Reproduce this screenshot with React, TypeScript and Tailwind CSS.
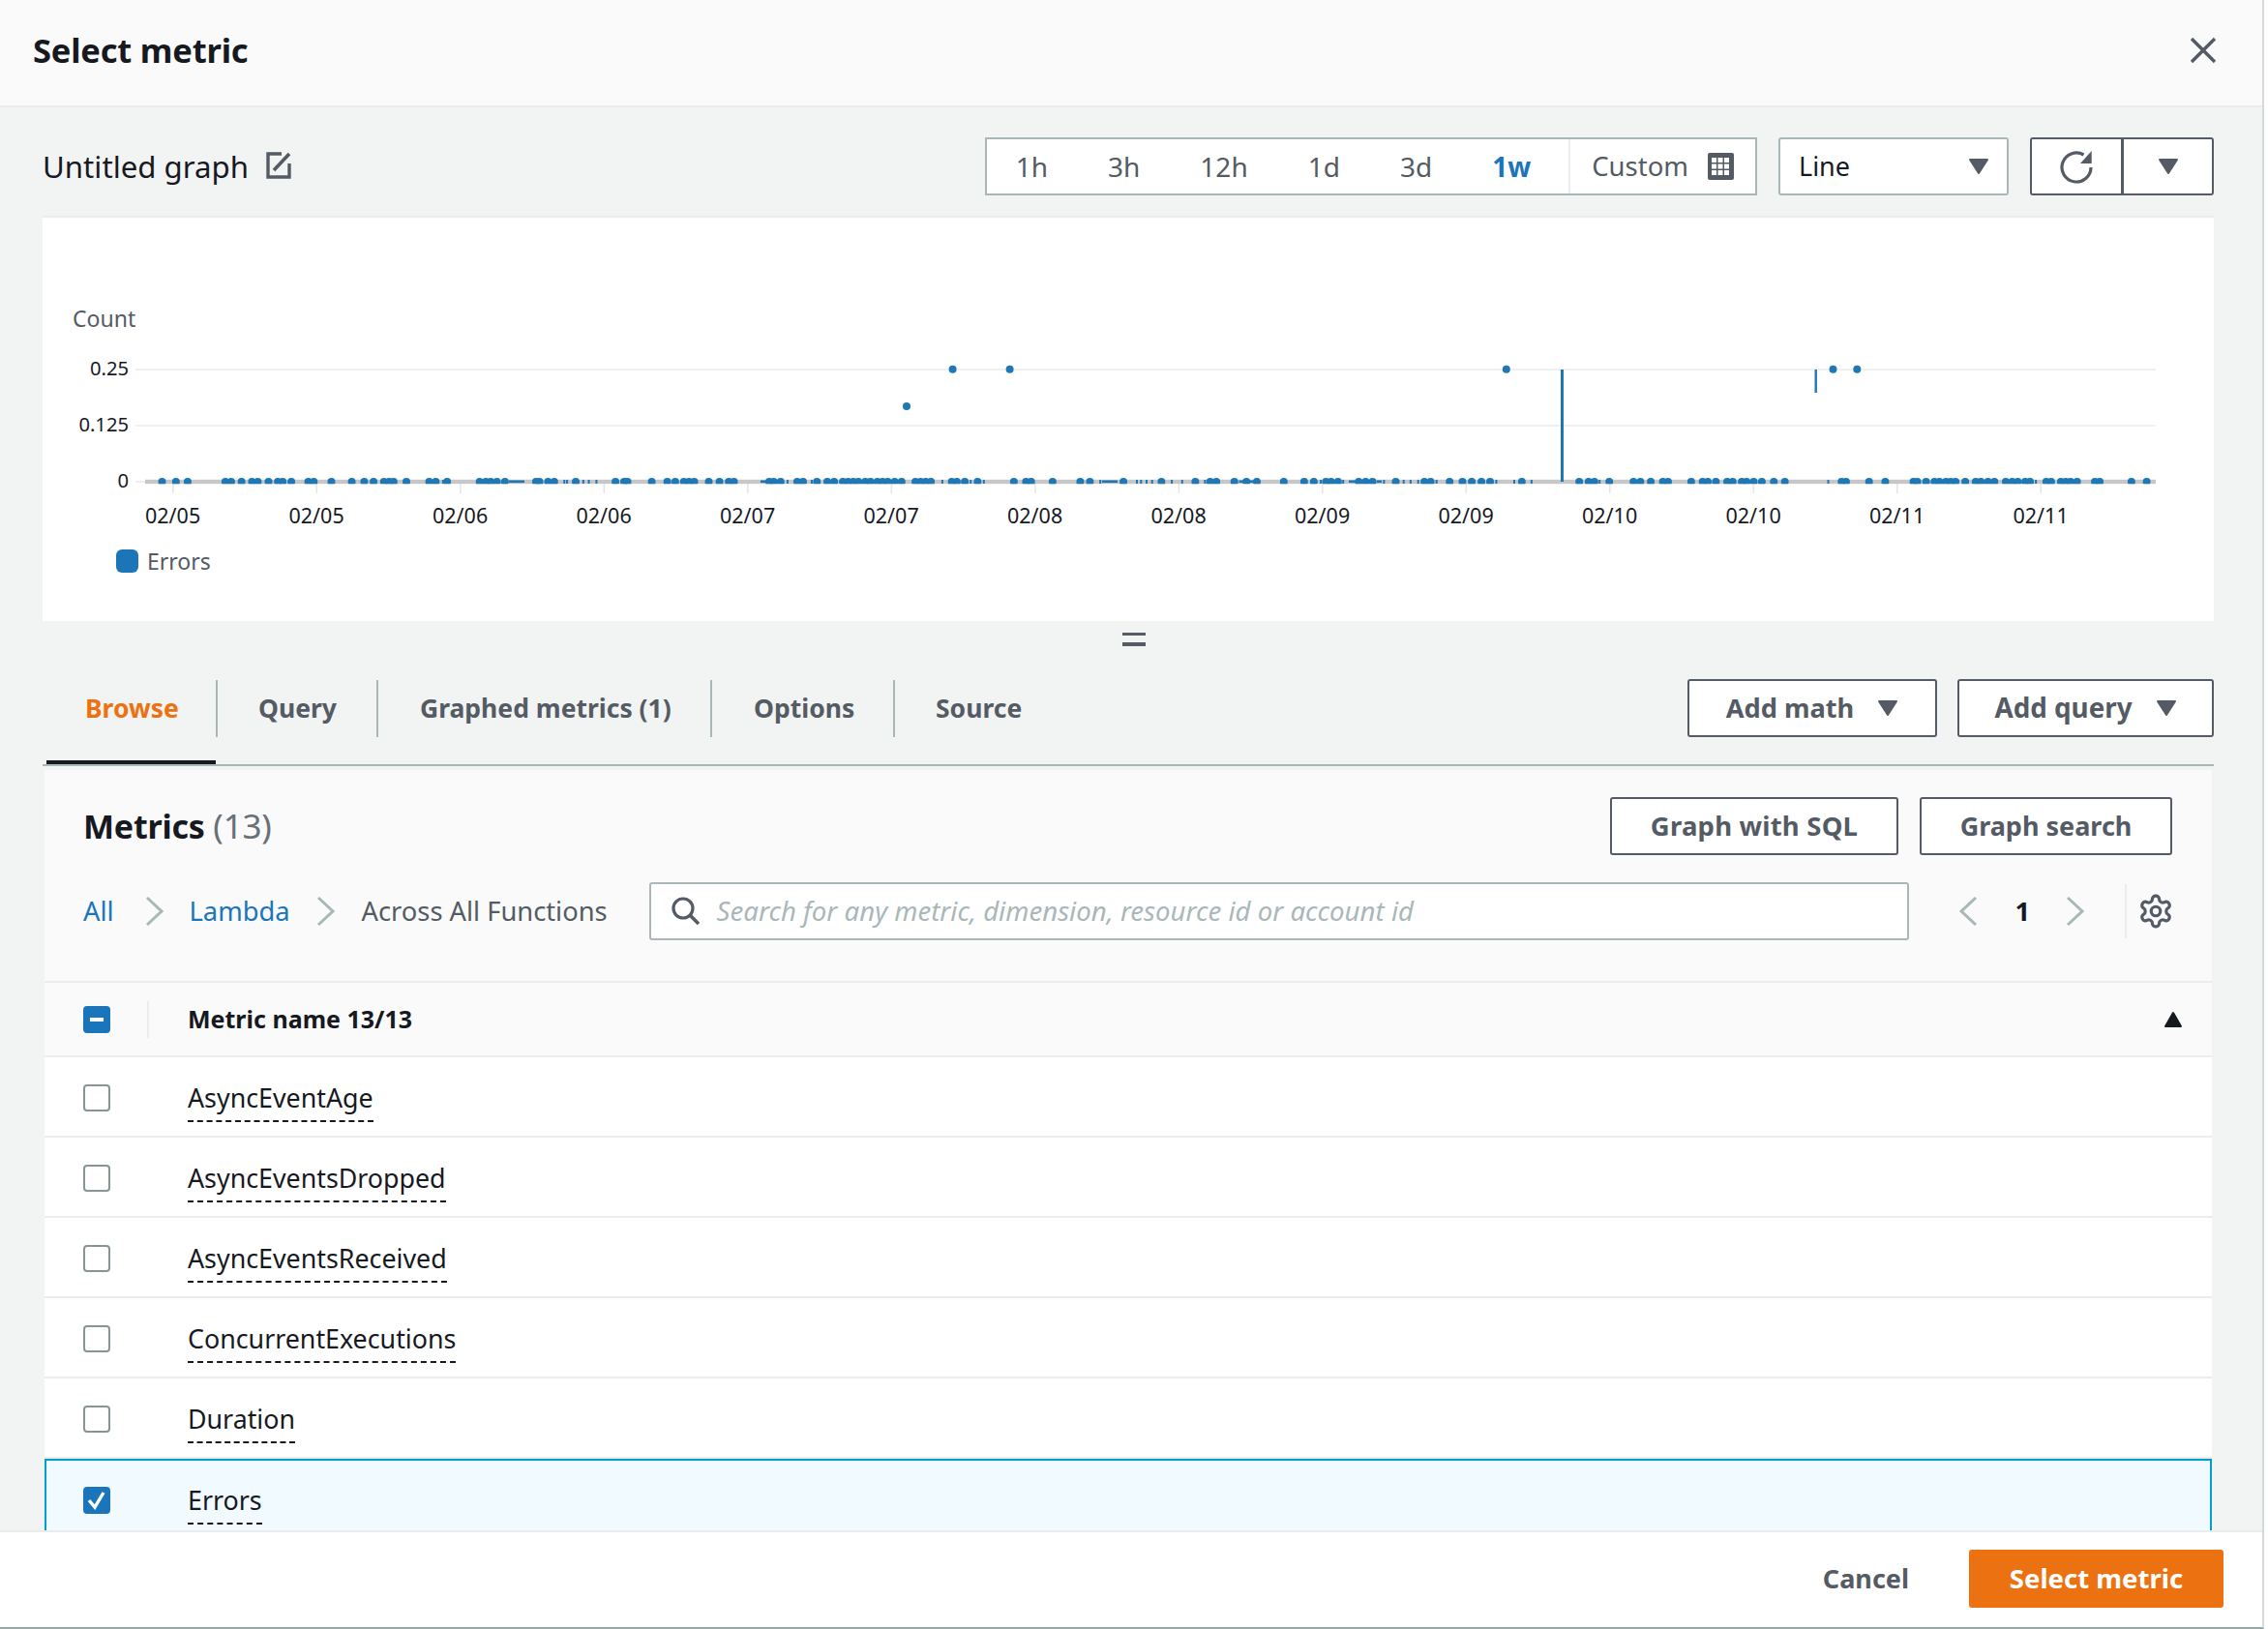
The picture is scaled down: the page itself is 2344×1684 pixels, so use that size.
import React from "react";

const BLUE = "#1f77b4";
const bottomDots = [
  ...[133,173,207,316,333,363,393,410,441,468,482,507,556,572,623,682,718,745,775,790,803,840,906,925,958,1052,1070,1084,1102,1125,1215,1225,1250,1268,1330,1445,1470,1480,1550].map((z) => 120 + z / 2.8),
  ...[27,50,75,90,105,147,178,205,220,322,335,355,403,420,460,490,510,535,550,565,580,600,615,635,650,665,685,705,745,760,775,790,850,865,888,925,1030,1065,1080,1142,1222,1250,1347,1457,1555].map((z) => 680 + z / 2.8),
  ...[30,48,100,135,165,243,302,330,365,380,400,460,480,500,567,650,668,723,760,787,815,840,932,1098,1125,1142,1185,1255,1275,1305,1340,1355,1422,1455,1470].map((z) => 1240 + z / 2.8),
  ...[10,45,62,90,105,127,152,189,223,398,412,483,533,620,632,659,685,700,720,735,750,780,812,828,850,870,905,925,942,965,980,1030,1045,1075,1090,1105,1125,1180,1195,1293,1340].map((z) => 1770 + z / 2.987),
];
const smallTicks = [
  ...[946,1297,1305,1352,1368,1390].map((z) => 120 + z / 2.8),
  ...[375,445,823,905,943,1280,1386,1398,1414,1430,1487,1517].map((z) => 680 + z / 2.8),
  ...[15,350,415,533,590,610,632,685,858,910,960,1157].map((z) => 1240 + z / 2.8),
  ...[357,998].map((z) => 1770 + z / 2.987),
];
const bottomLines: [number, number][] = [
  [526, 542],
  [786, 800],
  [1139, 1155],
  [1280.5, 1298],
  [1394, 1401],
  [1423, 1428],
];
const upperDots: [number, number][] = [
  [937, 420],
  [984.6, 381.7],
  [1043.6, 381.7],
  [1556.8, 381.7],
  [1894.5, 381.7],
  [1919.3, 381.7],
];
const dates = ["02/05","02/05","02/06","02/06","02/07","02/07","02/08","02/08","02/09","02/09","02/10","02/10","02/11","02/11"];
const metricRows = ["AsyncEventAge","AsyncEventsDropped","AsyncEventsReceived","ConcurrentExecutions","Duration"];

function Caret({ className = "" }: { className?: string }) {
  return (
    <svg width="22" height="18" viewBox="0 0 22 18" className={className}>
      <path d="M2 2 H20 L11 16 Z" fill="#545b64" stroke="#545b64" strokeWidth="2" strokeLinejoin="round" />
    </svg>
  );
}

function Chevron({ dir = "right", color = "#aab7b8" }: { dir?: "left" | "right"; color?: string }) {
  return (
    <svg width="20" height="32" viewBox="0 0 20 32" fill="none">
      <path d={dir === "right" ? "M2 2 L17 16 L2 30" : "M18 2 L3 16 L18 30"} stroke={color} strokeWidth="3" />
    </svg>
  );
}

function OutlineButton({ children, className = "" }: { children: React.ReactNode; className?: string }) {
  return (
    <div className={`h-[60px] flex items-center justify-center rounded-[3px] border-2 border-[#545b64] bg-white font-bold text-[#545b64] ${className}`}>
      {children}
    </div>
  );
}

function Check({ children, filled }: { children?: React.ReactNode; filled?: boolean }) {
  return (
    <div className={`w-[28px] h-[28px] rounded-[4px] flex items-center justify-center border-2 ${filled ? "bg-[#1b75bb] border-[#1b75bb]" : "bg-white border-[#879596]"}`}>
      {children}
    </div>
  );
}

function Row({ name, selected }: { name: string; selected?: boolean }) {
  return (
    <div className={`shrink-0 flex items-center h-[83px] ${selected ? "border-2 border-[#00a1c9] bg-[#f1faff] pl-[38px]" : "border-b-2 border-[#eaeded] bg-white pl-[40px]"}`}>
      <div className="w-[108px] mt-[3px]">
        <Check filled={selected}>
          {selected && (
            <svg width="22" height="22" viewBox="0 0 22 22" fill="none">
              <path d="M3 11 L9 18 L18 3" stroke="white" strokeWidth="3.4" />
            </svg>
          )}
        </Check>
      </div>
      <span className="text-[26.8px] leading-[34px] text-[#16191f] border-b-2 border-dashed border-[#16191f] mt-[10px] pb-[6px]">{name}</span>
    </div>
  );
}

export default function App() {
  return (
    <div className="w-[2344px] h-[1684px] bg-white font-['Noto_Sans','Liberation_Sans',sans-serif] overflow-hidden">
      <div className="w-[2340px] h-[1684px] flex flex-col border-r-2 border-b-2 border-r-[#d5dbdb] border-b-[#95a5a6]">
        {/* header */}
        <header className="h-[111px] shrink-0 flex items-center justify-between pl-[34px] pr-[47px] pb-[5px] bg-[#fafafa] border-b-2 border-[#eaeded]">
          <h1 className="text-[34.5px] font-bold text-[#16191f] tracking-[-0.2px]">Select metric</h1>
          <svg width="28" height="28" viewBox="0 0 28 28" fill="none">
            <path d="M2 2 L26 26 M26 2 L2 26" stroke="#545b64" strokeWidth="3.4" />
          </svg>
        </header>

        {/* body */}
        <main className="flex-1 min-h-0 overflow-hidden bg-[#f2f3f3] pl-[44px] pr-[50px] flex flex-col">
          <div className="shrink-0 h-[60px] mt-[31px] flex items-center">
            <span className="text-[31.2px] text-[#16191f]">Untitled graph</span>
            <svg width="27" height="28" viewBox="0 0 27 28" fill="none" className="ml-[18px] mb-[2px]">
              <path d="M16 2 H2 V26 H24 V12" stroke="#545b64" strokeWidth="3.4" />
              <path d="M8 19 L24 2" stroke="#545b64" strokeWidth="3.6" />
            </svg>
            <div className="ml-auto flex items-center h-[60px] bg-white border-2 border-[#aab7b8] text-[28px] text-[#545b64]">
              <div className="flex items-center gap-[62px] pl-[30px] pr-[39px] h-full border-r-2 border-[#eaeded]">
                <span>1h</span>
                <span>3h</span>
                <span>12h</span>
                <span>1d</span>
                <span>3d</span>
                <span className="font-bold text-[#1b75bb]">1w</span>
              </div>
              <div className="flex items-center pl-[22px] pr-[22px] gap-[20px]">
                <span className="text-[27.5px]">Custom</span>
                <svg width="27" height="28" viewBox="0 0 27 28">
                  <rect width="27" height="28" rx="2" fill="#545b64" />
                  {[4, 10.5, 17].flatMap((x) =>
                    [4, 10.5, 17].map((y) => <rect key={`${x}-${y}`} x={x} y={y + 1} width="5" height="5" fill="white" />)
                  )}
                </svg>
              </div>
            </div>
            <div className="ml-[22px] w-[238px] h-[60px] flex items-center justify-between pl-[19px] pr-[18px] bg-white border-2 border-[#aab7b8] rounded-[3px] text-[27px] text-[#16191f]">
              <span>Line</span>
              <Caret />
            </div>
            <div className="ml-[22px] flex">
              <div className="w-[96px] h-[60px] flex items-center justify-center bg-white border-2 border-[#545b64] rounded-l-[3px]">
                <svg width="36" height="38" viewBox="0 0 36 38" fill="none">
                  <path d="M33 20 A15 15 0 1 1 25.5 7" stroke="#545b64" strokeWidth="3.2" />
                  <path d="M33.7 3 V16 H22 Z" fill="#545b64" />
                </svg>
              </div>
              <div className="w-[95px] h-[60px] -ml-[1px] flex items-center justify-center bg-white border-2 border-[#545b64] rounded-r-[3px]">
                <Caret />
              </div>
            </div>
          </div>

          {/* chart */}
          <section className="shrink-0 mt-[21px] h-[419px] bg-white border-t-2 border-[#eaeded]">
            <svg width="2244" height="333" viewBox="44 225 2244 333" className="block">
              <g fontFamily="'Noto Sans'" fontSize="20.2" fill="#16191f">
                <text x="75" y="337.5" fill="#545b64" fontSize="23">Count</text>
                <text x="133" y="388" textAnchor="end">0.25</text>
                <text x="133" y="446" textAnchor="end">0.125</text>
                <text x="133" y="503.5" textAnchor="end">0</text>
                {dates.map((d, i) => (
                  <text key={i} x={178.6 + i * 148.5} y="540.5" textAnchor="middle" fontSize="21.5">{d}</text>
                ))}
              </g>
              <line x1="140" x2="2228" y1="382" y2="382" stroke="#eaeded" strokeWidth="1.6" />
              <line x1="140" x2="2228" y1="440" y2="440" stroke="#eaeded" strokeWidth="1.6" />
              <line x1="140" x2="150" y1="498" y2="498" stroke="#eaeded" strokeWidth="1.6" />
              {dates.map((_, i) => (
                <line key={i} x1={178.8 + i * 148.5} x2={178.8 + i * 148.5} y1="500" y2="510" stroke="#e6e6e6" strokeWidth="1.6" />
              ))}
              <rect x="150" y="495.8" width="2078" height="4.4" fill="#c7c7c7" />
              <clipPath id="plotClip">
                <rect x="140" y="300" width="2088" height="200.2" />
              </clipPath>
              <g clipPath="url(#plotClip)" fill={BLUE}>
                {bottomDots.map((x, i) => (
                  <circle key={i} cx={x} cy="498" r="4" />
                ))}
                {smallTicks.map((x, i) => (
                  <rect key={i} x={x - 1} y="496" width="2" height="4" />
                ))}
                {bottomLines.map(([a, b], i) => (
                  <rect key={i} x={a} y="496.5" width={b - a} height="2.6" />
                ))}
              </g>
              {upperDots.map(([x, y], i) => (
                <circle key={i} cx={x} cy={y} r="4" fill={BLUE} />
              ))}
              <rect x="1613" y="382" width="3" height="116" fill={BLUE} />
              <rect x="1875.5" y="382" width="2.4" height="24" fill={BLUE} />
            </svg>
            <div className="flex items-center pl-[76px] mt-[5px]">
              <span className="w-[23px] h-[24px] rounded-[6px] bg-[#1b75b7]" />
              <span className="ml-[9px] text-[23px] text-[#545b64]">Errors</span>
            </div>
          </section>

          {/* resizer */}
          <div className="shrink-0 h-[60px] pt-[12px] pl-[12px] flex flex-col items-center">
            <div className="w-[24px] h-[3px] bg-[#545b64]" />
            <div className="w-[24px] h-[4px] mt-[7px] bg-[#545b64]" />
          </div>

          {/* tabs */}
          <div className="shrink-0 h-[90px] flex items-start border-b-2 border-[#aab7b8] relative">
            <div className="flex items-stretch h-[60px] pt-[1px] text-[26.5px] font-bold text-[#545b64]">
              <div className="w-[179px] pl-[44px] flex items-center text-[#ec7211]">Browse</div>
              <div className="w-[166px] pl-[42px] flex items-center border-l-2 border-[#aab7b8]">Query</div>
              <div className="w-[345px] pl-[43px] flex items-center border-l-2 border-[#aab7b8]">Graphed metrics (1)</div>
              <div className="w-[189px] pl-[43px] flex items-center border-l-2 border-[#aab7b8]">Options</div>
              <div className="pl-[42px] flex items-center border-l-2 border-[#aab7b8]">Source</div>
            </div>
            <div className="absolute left-[4px] bottom-[0px] w-[175px] h-[4px] bg-[#16191f]" />
            <div className="ml-auto flex gap-[21px]">
              <OutlineButton className="w-[258px] gap-[24px] text-[27.2px]">
                <span>Add math</span>
                <Caret />
              </OutlineButton>
              <OutlineButton className="w-[265px] gap-[24px] text-[27.8px]">
                <span>Add query</span>
                <Caret />
              </OutlineButton>
            </div>
          </div>

          {/* metrics */}
          <section className="flex-1 min-h-0 mt-[4px] mx-[2px] bg-[#fafafa] overflow-hidden flex flex-col">
            <div className="shrink-0 flex items-center h-[60px] mt-[28px] pl-[40px] pr-[41px]">
              <h2 className="text-[34px] font-bold text-[#16191f] tracking-[-0.2px]">
                Metrics <span className="text-[35px] font-normal text-[#687078]">(13)</span>
              </h2>
              <OutlineButton className="ml-auto w-[298px] text-[27.5px] tracking-[0.2px]">Graph with SQL</OutlineButton>
              <OutlineButton className="ml-[22px] w-[261px] text-[27px]">Graph search</OutlineButton>
            </div>
            <div className="shrink-0 flex items-center h-[60px] mt-[28px] pl-[40px] text-[27.3px]">
              <span className="text-[#1b75bb]">All</span>
              <span className="ml-[32px] mr-[26px] flex"><Chevron /></span>
              <span className="text-[#1b75bb]">Lambda</span>
              <span className="ml-[27px] mr-[27px] flex"><Chevron /></span>
              <span className="text-[#545b64]">Across All Functions</span>
              <div className="ml-[43px] w-[1302px] h-[60px] flex items-center bg-white border-2 border-[#aab7b8] rounded-[3px] pl-[20px]">
                <svg width="32" height="32" viewBox="0 0 32 32" fill="none">
                  <circle cx="13" cy="13" r="10" stroke="#545b64" strokeWidth="3.2" />
                  <path d="M20 20 L29 29" stroke="#545b64" strokeWidth="3.6" />
                </svg>
                <span className="ml-[16px] italic text-[27.6px] text-[#aab7b8]">Search for any metric, dimension, resource id or account id</span>
              </div>
              <span className="ml-[51px] flex"><Chevron dir="left" /></span>
              <span className="ml-[39px] font-bold text-[#16191f]">1</span>
              <span className="ml-[37px] flex"><Chevron /></span>
              <div className="ml-[41px] h-[56px] border-l-2 border-[#eaeded] pl-[11px] flex items-center">
                <svg width="38" height="38" viewBox="0 0 24 24" fill="none" stroke="#545b64" strokeWidth="2">
                  <path d="M12.22 2h-.44a2 2 0 0 0-2 2v.18a2 2 0 0 1-1 1.73l-.43.25a2 2 0 0 1-2 0l-.15-.08a2 2 0 0 0-2.73.73l-.22.38a2 2 0 0 0 .73 2.73l.15.1a2 2 0 0 1 1 1.72v.51a2 2 0 0 1-1 1.74l-.15.09a2 2 0 0 0-.73 2.73l.22.38a2 2 0 0 0 2.73.73l.15-.08a2 2 0 0 1 2 0l.43.25a2 2 0 0 1 1 1.73V20a2 2 0 0 0 2 2h.44a2 2 0 0 0 2-2v-.18a2 2 0 0 1 1-1.73l.43-.25a2 2 0 0 1 2 0l.15.08a2 2 0 0 0 2.73-.73l.22-.39a2 2 0 0 0-.73-2.73l-.15-.08a2 2 0 0 1-1-1.74v-.5a2 2 0 0 1 1-1.74l.15-.09a2 2 0 0 0 .73-2.73l-.22-.38a2 2 0 0 0-2.73-.73l-.15.08a2 2 0 0 1-2 0l-.43-.25a2 2 0 0 1-1-1.73V4a2 2 0 0 0-2-2z" />
                  <circle cx="12" cy="12" r="3" />
                </svg>
              </div>
            </div>
            <div className="shrink-0 mt-[42px] h-[79px] flex items-center pl-[40px] pr-[30px] border-y-2 border-[#eaeded]">
              <Check filled>
                <span className="w-[14px] h-[4px] bg-white" />
              </Check>
              <div className="ml-[38px] h-[38px] border-l-2 border-[#eaeded]" />
              <span className="ml-[40px] text-[25px] font-bold text-[#16191f]">Metric name 13/13</span>
              <svg width="20" height="18" viewBox="0 0 20 18" className="ml-auto">
                <path d="M2 16 L10 2 L18 16 Z" fill="#16191f" stroke="#16191f" strokeWidth="2" strokeLinejoin="round" />
              </svg>
            </div>
            {metricRows.map((m) => (
              <Row key={m} name={m} />
            ))}
            <Row name="Errors" selected />
          </section>
        </main>

        {/* footer */}
        <footer className="shrink-0 h-[100px] flex items-center justify-end pr-[40px] pb-[2px] bg-white border-t-2 border-[#eaeded]">
          <span className="text-[27px] font-bold text-[#545b64]">Cancel</span>
          <div className="ml-[62px] w-[263px] h-[60px] flex items-center justify-center rounded-[3px] bg-[#ec7211] text-[27.5px] font-bold text-white">
            Select metric
          </div>
        </footer>
      </div>
    </div>
  );
}
